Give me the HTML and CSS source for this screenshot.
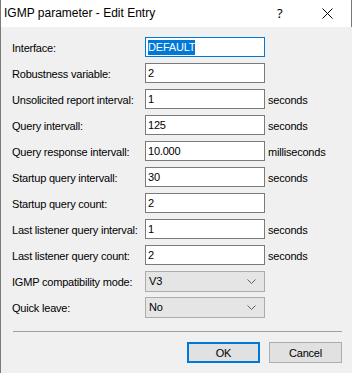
FILE: index.html
```html
<!DOCTYPE html>
<html>
<head>
<meta charset="utf-8">
<link rel="stylesheet" href="styles.css">
</head>
<body>
<div class="window">
  <div class="titlebar">
    <span class="title">IGMP parameter - Edit Entry</span>
    <span class="help">?</span>
    <span class="close"><svg width="11" height="11" viewBox="0 0 11 11"><path d="M0.5 0.5 L10.5 10.5 M10.5 0.5 L0.5 10.5" stroke="#000" stroke-width="1" fill="none"/></svg></span>
  </div>
  <div class="body">
    <div class="form">
      <label>Interface:</label><div class="input focused"><span class="sel">DEFAULT</span></div><span class="unit"></span>
      <label>Robustness variable:</label><div class="input">2</div><span class="unit"></span>
      <label>Unsolicited report interval:</label><div class="input">1</div><span class="unit">seconds</span>
      <label>Query intervall:</label><div class="input">125</div><span class="unit">seconds</span>
      <label>Query response intervall:</label><div class="input">10.000</div><span class="unit">milliseconds</span>
      <label>Startup query intervall:</label><div class="input">30</div><span class="unit">seconds</span>
      <label>Startup query count:</label><div class="input">2</div><span class="unit"></span>
      <label>Last listener query interval:</label><div class="input">1</div><span class="unit">seconds</span>
      <label>Last listener query count:</label><div class="input">2</div><span class="unit">seconds</span>
      <label>IGMP compatibility mode:</label><div class="select"><span>V3</span><svg width="9" height="5" viewBox="0 0 9 5"><path d="M0.5 0.5 L4.5 4.5 L8.5 0.5" stroke="#606060" fill="none"/></svg></div><span class="unit"></span>
      <label>Quick leave:</label><div class="select"><span>No</span><svg width="9" height="5" viewBox="0 0 9 5"><path d="M0.5 0.5 L4.5 4.5 L8.5 0.5" stroke="#606060" fill="none"/></svg></div><span class="unit"></span>
    </div>
    <div class="sep"></div>
    <div class="buttons">
      <button class="btn default">OK</button>
      <button class="btn">Cancel</button>
    </div>
  </div>
</div>
</body>
</html>
```
FILE: styles.css
```css
html, body {
  margin: 0;
  padding: 0;
  background: #f0f0f0;
}
.window {
  width: 352px;
  height: 373px;
  box-sizing: border-box;
  border-left: 1px solid #7a7a7a;
  background: #f0f0f0;
  font-family: "Liberation Sans", Arial, sans-serif;
  font-size: 11px;
  letter-spacing: -0.2px;
  color: #000;
  display: flex;
  flex-direction: column;
}
.titlebar {
  height: 27px;
  background: #fff;
  display: flex;
  align-items: center;
  border-right: 1px solid #7a7a7a;
  box-sizing: border-box;
  letter-spacing: 0;
}
.title {
  font-family: "Liberation Sans", Arial, sans-serif;
  font-size: 12px;
  padding-left: 3px;
  flex: 1;
  margin-top: -1px;
}
.help {
  font-family: "Noto Sans", sans-serif;
  font-size: 13px;
  width: 12px;
  margin-right: 33px;
  margin-top: -1px;
}
.close {
  display: flex;
  margin-right: 18px;
}
.body {
  padding: 10px 10px 0 11px;
  display: flex;
  flex-direction: column;
}
.form {
  display: grid;
  grid-template-columns: 133px 120px auto;
  grid-auto-rows: 20px;
  row-gap: 6px;
  align-items: center;
}
.form label {
  white-space: nowrap;
  padding-top: 1px;
}
.unit {
  padding-left: 3px;
  padding-top: 1px;
}
.input {
  height: 20px;
  box-sizing: border-box;
  border: 1px solid #7a7a7a;
  background: #fff;
  padding: 0 2px;
  line-height: 18px;
}
.input.focused {
  border-color: #0078d7;
}
.sel {
  background: #0078d7;
  color: #fff;
  padding: 1px 0 2px;
}
.select {
  height: 21px;
  box-sizing: border-box;
  border: 1px solid #acacac;
  background: #e5e5e5;
  display: flex;
  align-items: center;
  justify-content: space-between;
  padding: 0 8px 0 3px;
}
.sep {
  margin-top: 14px;
  margin-left: 1px;
  width: 329px;
  height: 1px;
  background: #a0a0a0;
}
.buttons {
  display: flex;
  justify-content: flex-end;
  gap: 9px;
  margin-top: 10px;
  width: 330px;
}
.btn {
  width: 73px;
  height: 21px;
  box-sizing: border-box;
  border: 1px solid #adadad;
  background: #e1e1e1;
  font-family: "Liberation Sans", Arial, sans-serif;
  font-size: 11px;
  letter-spacing: -0.2px;
  color: #000;
  padding: 0;
  margin: 0;
}
.btn.default {
  border: 2px solid #0078d7;
}
```
